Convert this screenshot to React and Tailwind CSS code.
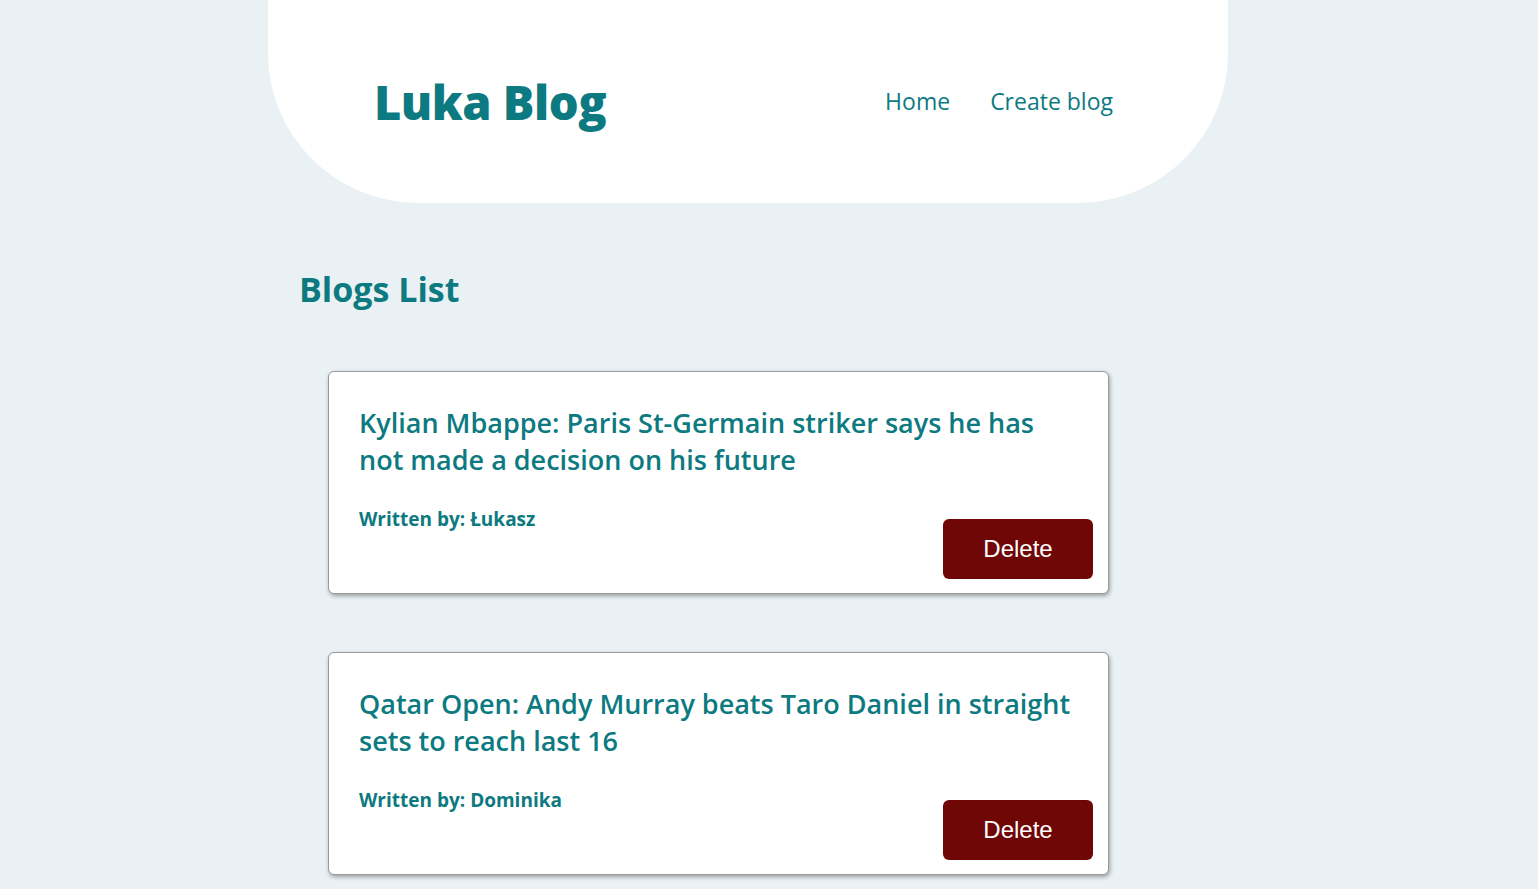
const blogs = [
  {
    id: 1,
    title: 'Kylian Mbappe: Paris St-Germain striker says he has not made a decision on his future',
    author: 'Łukasz',
  },
  {
    id: 2,
    title: 'Qatar Open: Andy Murray beats Taro Daniel in straight sets to reach last 16',
    author: 'Dominika',
  },
]

function Navbar() {
  return (
    <nav className="flex items-center justify-between h-[203px] bg-white rounded-b-[150px] pl-[106px] pr-[115px]">
      <h1 className="text-[47px] font-extrabold tracking-[-0.5px] text-[#0c7a80] mt-[2px]">Luka Blog</h1>
      <div className="flex items-center gap-[40px] text-[23px] text-[#0c7a80]">
        <a href="/">Home</a>
        <a href="/create">Create blog</a>
      </div>
    </nav>
  )
}

function BlogCard({ blog }) {
  return (
    <div className="bg-white border border-[#9a9a9a] rounded-[6px] shadow-[1px_2px_4px_rgba(0,0,0,0.35)] pt-[32px] pb-[14px] px-[30px]">
      <h2 className="text-[27px] leading-[37px] font-semibold text-[#0c7a80]">{blog.title}</h2>
      <div className="flex justify-between items-start mt-[26px] -mr-[15px]">
        <p className="text-[19px] font-bold text-[#0c7a80] leading-[30px]">Written by: {blog.author}</p>
        <button className="mt-[15px] w-[150px] h-[60px] rounded-[6px] bg-[#700707] text-white text-[24px] font-['Liberation_Sans',Arial,sans-serif]">
          Delete
        </button>
      </div>
    </div>
  )
}

export default function App() {
  return (
    <div className="min-h-screen bg-[#e9f1f4] font-['Open_Sans',sans-serif]">
      <div className="w-[960px] ml-[268px]">
        <Navbar />
        <div className="pl-[31px] pt-[61px]">
          <h2 className="text-[34px] font-bold text-[#0c7a80]">Blogs List</h2>
          <div className="flex flex-col gap-[58px] mt-[56px] ml-[29px] w-[781px]">
            {blogs.map((blog) => (
              <BlogCard key={blog.id} blog={blog} />
            ))}
          </div>
        </div>
      </div>
    </div>
  )
}
